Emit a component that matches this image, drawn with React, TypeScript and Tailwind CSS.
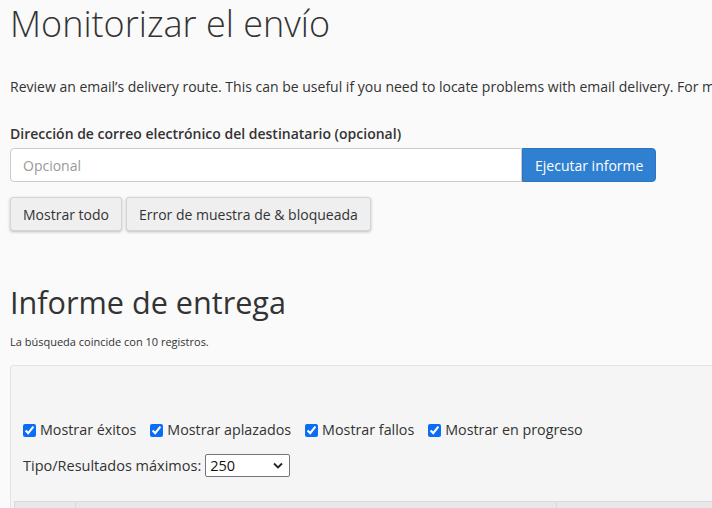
import React, { useState } from 'react';

const filters = [
  { id: 'success', label: 'Mostrar éxitos' },
  { id: 'defer', label: 'Mostrar aplazados' },
  { id: 'fail', label: 'Mostrar fallos' },
  { id: 'inprogress', label: 'Mostrar en progreso' },
];

const App: React.FC = () => {
  const [email, setEmail] = useState('');
  const [checked, setChecked] = useState<Record<string, boolean>>({
    success: true,
    defer: true,
    fail: true,
    inprogress: true,
  });
  const [max, setMax] = useState('250');

  return (
    <div
      className="w-[712px] h-[508px] overflow-hidden bg-[#fafafa] text-[#333]"
      style={{ fontFamily: '"Open Sans", "Noto Sans", sans-serif' }}
    >
      <div className="w-[1100px] pl-[10px]">
        {/* Header */}
        <h1 className="pt-[4px] text-[36px] leading-[40px] font-light text-[#333]">
          Monitorizar el envío
        </h1>
        <p className="mt-[33px] text-[14px] leading-[20px] whitespace-nowrap">
          Review an email’s delivery route. This can be useful if you need to locate problems with email delivery. For more information, read our documentation.
        </p>

        {/* Search form */}
        <div className="mt-[27px]">
          <label htmlFor="recipient" className="block text-[14px] leading-[20px] font-semibold">
            Dirección de correo electrónico del destinatario (opcional)
          </label>
          <div className="mt-[4px] flex">
            <input
              id="recipient"
              value={email}
              onChange={(e) => setEmail(e.target.value)}
              placeholder="Opcional"
              className="w-[512px] h-[34px] px-[12px] text-[14px] bg-white border border-[#ccc] rounded-l-[4px] placeholder:text-[#999] outline-none"
            />
            <button className="h-[34px] px-[12px] text-[14px] text-white bg-[#2f80d1] border border-[#2a76c2] rounded-r-[4px]">
              Ejecutar informe
            </button>
          </div>
          <div className="mt-[15px] flex gap-[4px]">
            <button className="h-[34px] px-[12px] text-[14px] bg-[#efefef] border border-[#d5d5d5] rounded-[3px] shadow-[0_1px_3px_rgba(0,0,0,0.25)]">
              Mostrar todo
            </button>
            <button className="h-[34px] px-[12px] text-[14px] bg-[#efefef] border border-[#d5d5d5] rounded-[3px] shadow-[0_1px_3px_rgba(0,0,0,0.25)]">
              Error de muestra de &amp; bloqueada
            </button>
          </div>
        </div>

        {/* Report */}
        <h2 className="mt-[55px] text-[30.6px] leading-[33px] font-normal">Informe de entrega</h2>
        <p className="mt-[16px] text-[11px] leading-[14px]">La búsqueda coincide con 10 registros.</p>

        <div className="mt-[16px] bg-[#f5f5f5] border border-[#e3e3e3] rounded-l-[3px] pt-[54px] pl-[12px]">
          <div className="flex items-center text-[14.3px] leading-[20px]">
            {filters.map((f) => (
              <label key={f.id} className="flex items-center mr-[14px]">
                <input
                  type="checkbox"
                  checked={checked[f.id]}
                  onChange={() => setChecked({ ...checked, [f.id]: !checked[f.id] })}
                  className="w-[13px] h-[13px] mr-[4px] accent-[#0b6cf5]"
                />
                {f.label}
              </label>
            ))}
          </div>
          <div className="mt-[14px] flex items-center text-[14.5px]">
            <span className="mr-[4px]">Tipo/Resultados máximos:</span>
            <div className="relative">
              <select
                value={max}
                onChange={(e) => setMax(e.target.value)}
                className="appearance-none w-[85px] h-[23px] pl-[4px] text-[14.5px] bg-white border border-[#767676] rounded-[2px] text-[#111]"
              >
                <option>25</option>
                <option>50</option>
                <option>100</option>
                <option>250</option>
                <option>500</option>
              </select>
              <svg
                className="absolute right-[7px] top-[8px] pointer-events-none"
                width="10"
                height="7"
                viewBox="0 0 10 7"
              >
                <path d="M1 1.5 L5 5.5 L9 1.5" fill="none" stroke="#222" strokeWidth="1.8" />
              </svg>
            </div>
          </div>

          {/* Table header */}
          <div className="mt-[24px] -ml-[9px] flex h-[40px] bg-[#e8e8e8] border-t border-[#dadada]">
            <div className="w-[61px] border-l border-[#d8d8d8]" />
            <div className="w-[481px] border-l border-[#d8d8d8]" />
            <div className="flex-1 border-l border-[#d8d8d8]" />
          </div>
        </div>
      </div>
    </div>
  );
};

export default App;
